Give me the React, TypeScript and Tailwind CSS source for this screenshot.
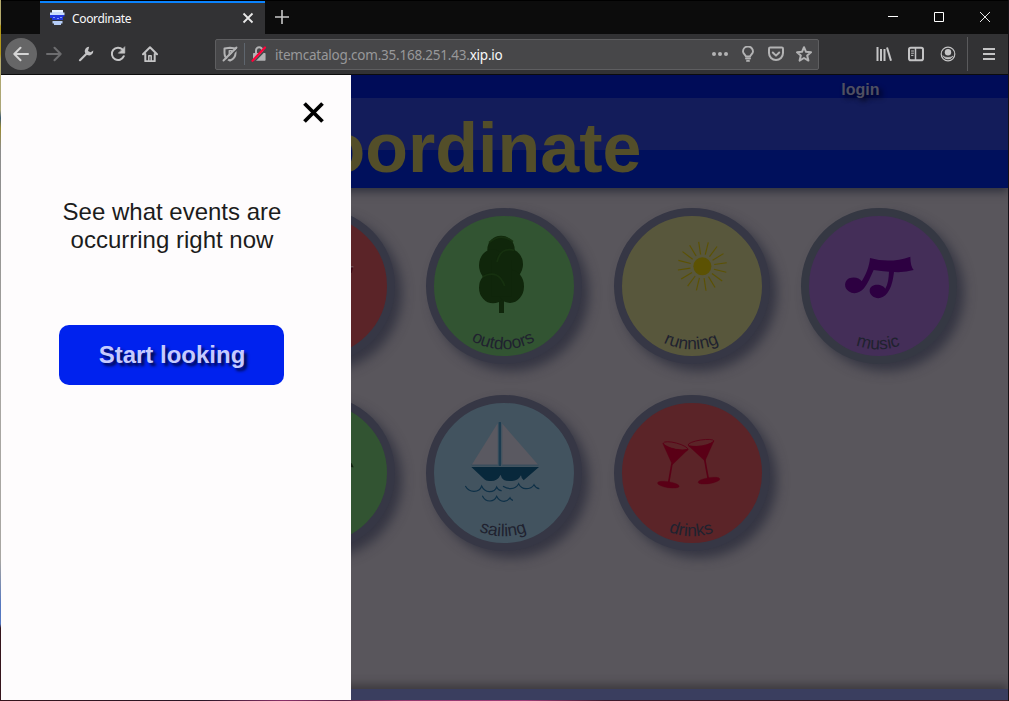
import React from "react";

type Category = {
  label: string;
  fill: string;
  ring: string;
  art: React.ReactNode;
};

const ringColor = "border-[#363745]";

const rays = Array.from({ length: 16 }, (_, i) => i * 22.5 + 10);

const rowOne: Category[] = [
  {
    label: "",
    fill: "bg-[#5b2428]",
    ring: ringColor,
    art: (
      <g transform="translate(304 -54)">
        <path d="M30 230h8v3l-4 16h-4z" fill="#3f0a16" />
        <path d="M30 229h9v3h-9z" fill="#7a6468" />
      </g>
    ),
  },
  {
    label: "outdoors",
    fill: "bg-[#325432]",
    ring: ringColor,
    art: (
      <g transform="translate(-258 -54)" fill="#10260b">
        <path d="M477 320h15v49h-15z" />
        <ellipse cx="483" cy="178" rx="41" ry="41" />
        <ellipse cx="458" cy="226" rx="41" ry="48" />
        <ellipse cx="508" cy="223" rx="41" ry="46" />
        <ellipse cx="459" cy="293" rx="42" ry="47" />
        <ellipse cx="510" cy="289" rx="42" ry="50" />
        <path d="M455 210h60v110h-60z" />
        <g fill="none" stroke="#16300f" strokeWidth="5">
          <path d="M447 158q36-32 72-3" />
          <path d="M471 216q10-46 52-35" />
          <path d="M428 260q48-24 66 28" />
        </g>
      </g>
    ),
  },
  {
    label: "running",
    fill: "bg-[#58573c]",
    ring: ringColor,
    art: (
      <g transform="translate(-42 -54)">
        <circle cx="307" cy="229" r="27" fill="#5c5203" />
        <g stroke="#5c5203" strokeWidth="3.4">
          {rays.map((a) => (
            <path key={a} d="M343 229H381" transform={`rotate(${a + 4} 307 229)`} />
          ))}
        </g>
      </g>
    ),
  },
  {
    label: "music",
    fill: "bg-[#442e58]",
    ring: "border-[#353843]",
    art: (
      <g transform="translate(-603 -54)" fill="#2d0041">
        <path d="M810 204Q870 221 931 200Q931 228 941 240Q915 248 882 246C879 270 875 292 862 309C850 326 830 329 817 318C804 307 807 289 824 285C839 282 852 289 856 296C864 282 866 264 867 245Q843 244 821 240C811 262 803 281 792 295C780 310 760 314 746 304C731 294 732 273 747 265C762 260 779 263 785 274C795 260 809 228 810 204Z" />
      </g>
    ),
  },
];

const rowTwo: Category[] = [
  {
    label: "",
    fill: "bg-[#325432]",
    ring: ringColor,
    art: (
      <g transform="translate(304 -45)">
        <path d="M30 252l4-3 4 9 2 4h-5l-5-2z" fill="#11210f" />
      </g>
    ),
  },
  {
    label: "sailing",
    fill: "bg-[#42535f]",
    ring: ringColor,
    art: (
      <g transform="translate(-258 -45)">
        <path d="M473 130V255H395Z" fill="#5a5961" />
        <path d="M487 131L595 255H487Z" fill="#5a5961" />
        <path d="M476 127q4-2 7 0V258h-7z" fill="#1d3c50" />
        <path d="M395 255H473M487 255H595" stroke="#2c4657" strokeWidth="2" />
        <path
          d="M394 261H597L551 301Q544 297 543 286Q534 303 516 303Q486 306 482 284Q472 304 451 303Q438 304 433 298Z"
          fill="#08283b"
        />
        <g fill="none" stroke="#0e3047" strokeWidth="3.4">
          <path d="M376 318Q385 334 402 334Q420 334 425 318Q432 334 448 335Q466 335 470 321Q476 333 485 332" />
          <path d="M489 319Q500 326 512 326Q529 325 536 311Q542 325 558 326Q575 326 582 314Q588 325 598 326" />
          <path d="M427 347Q434 363 450 363Q464 363 470 349Q477 364 492 364Q505 362 510 353Q513 360 519 361" />
        </g>
      </g>
    ),
  },
  {
    label: "drinks",
    fill: "bg-[#5b2428]",
    ring: ringColor,
    art: (
      <g transform="translate(-42 -45)" fill="#5a0016" stroke="#5a0016">
        <path d="M188 190L217 254L265 208Q226 214 192 194Z" strokeWidth="1" />
        <ellipse cx="227" cy="199" rx="38" ry="10" fill="none" strokeWidth="2.4" transform="rotate(15 227 199)" />
        <path d="M217 207q30 8 45 2l-12 3z" strokeWidth="3" />
        <path d="M216 250L206 308" strokeWidth="5" />
        <ellipse cx="205" cy="314" rx="33" ry="9" strokeWidth="1" transform="rotate(9 205 314)" />
        <path d="M265 197L315 243L342 182Q324 198 292 199Z" strokeWidth="1" />
        <ellipse cx="303" cy="189" rx="39" ry="9" fill="none" strokeWidth="2.4" transform="rotate(-9 303 189)" />
        <path d="M314 238L325 298" strokeWidth="5" />
        <ellipse cx="327" cy="302" rx="33" ry="9" strokeWidth="1" transform="rotate(-9 327 302)" />
      </g>
    ),
  },
];

function Badge({ item, id }: { item: Category; id: string }) {
  return (
    <div
      className={`h-[156px] w-[156px] shrink-0 rounded-full border-8 shadow-[7px_7px_12px_rgba(44,45,60,0.8)] ${item.ring} ${item.fill}`}
    >
      <svg viewBox="0 0 468 468" className="-m-2 h-[156px] w-[156px]">
        {item.art}
        {item.label && (
          <>
            <path id={id} d="M43 234A190 190 0 0 0 423 234" fill="none" />
            <text fontSize="52" fill="#20222f" textAnchor="middle" fontFamily="Liberation Sans, Arial, sans-serif">
              <textPath href={`#${id}`} startOffset="49.7%">
                {item.label}
              </textPath>
            </text>
          </>
        )}
      </svg>
    </div>
  );
}

function Icon({ children, className = "w-8" }: { children: React.ReactNode; className?: string }) {
  return (
    <span className={`flex h-8 shrink-0 items-center justify-center ${className}`}>
      <svg viewBox="0 0 16 16" className="h-4 w-4" fill="none" stroke="currentColor" strokeWidth="2" strokeLinecap="round" strokeLinejoin="round">
        {children}
      </svg>
    </span>
  );
}

function TabStrip() {
  return (
    <div className="flex h-[34px] border-t border-black bg-[#0c0c0c] text-[#f9f9fa]">
      <div className="ml-[39px] flex w-[225px] items-center border-t-2 border-[#0a84ff] bg-[#323234] pl-[9px]">
        <svg viewBox="0 0 16 16" className="-mt-px h-4 w-4">
          <path d="M3 0h11v2.500h1.500V5H1V2.500h2z" fill="#c9dcfb" />
          <path d="M3 0h11v2H3z" fill="#e9f2ff" />
          <path d="M1 5h14.500v1.500H14V10H3V8H1z" fill="#2036dc" />
          <path d="M4 7h2v1H4zM8 8h2v1H8zM11 7h2v1h-2z" fill="#7e95ff" />
          <path d="M3.500 11h10v2.500H12V15H5v-1.500H3.500z" fill="#b5cdf7" />
        </svg>
        <span className="ml-[7px] w-[166px] text-[12px] leading-4 tracking-[-0.33px]">Coordinate</span>
        <svg viewBox="0 0 20 20" className="-mt-px h-5 w-5" stroke="#e8e8e8" strokeWidth="1.8">
          <path d="M5.500 5.500l9 9M14.500 5.500l-9 9" />
        </svg>
      </div>
      <div className="flex w-[34px] items-center justify-center">
        <svg viewBox="0 0 14 14" className="-mt-[2px] h-[14px] w-[14px]" stroke="#c8c8c8" strokeWidth="1.6">
          <path d="M7 0v14M0 7h14" />
        </svg>
      </div>
      <div className="-mt-[2px] ml-auto flex">
        <span className="flex w-[46px] items-center justify-center">
          <svg viewBox="0 0 10 10" className="h-[10px] w-[10px]" fill="none" stroke="#fff">
            <path d="M0 4.500h10" />
          </svg>
        </span>
        <span className="flex w-[46px] items-center justify-center">
          <svg viewBox="0 0 10 10" className="h-[10px] w-[10px]" fill="none" stroke="#fff">
            <path d="M.5.5h9v9h-9z" />
          </svg>
        </span>
        <span className="flex w-[46px] items-center justify-center">
          <svg viewBox="0 0 10 10" className="h-[10px] w-[10px]" fill="none" stroke="#fff" strokeWidth="0.9">
            <path d="M0 0l10 10M10 0L0 10" />
          </svg>
        </span>
      </div>
    </div>
  );
}

function NavBar() {
  return (
    <div className="flex h-[41px] items-center border-b border-[#0c0c0d] bg-[#323234] pl-1 text-[#c4c4c5]">
      <div className="mr-px rounded-full bg-[#666667] text-[#d5d5d5]">
        <Icon>
          <path d="M15 8H1.500M7.500 1.800L1.300 8l6.200 6.200" />
        </Icon>
      </div>
      <Icon className="w-8 text-[#6d6d6f]">
        <path d="M1 8h13.500M8.500 1.800L14.700 8l-6.200 6.200" />
      </Icon>
      <Icon>
        <path d="M2 14.200l7-7" strokeWidth="2.200" />
        <path d="M11.200.8A4.300 4.300 0 0 0 7.200 7L9.200 9A4.300 4.300 0 0 0 15.300 4.600L12.600 6.200 10 5z" fill="currentColor" stroke="none" />
      </Icon>
      <Icon>
        <path d="M13.800 10.200A6.200 6.200 0 1 1 12.600 3.600" />
        <path d="M14.800 1v6.200H8.600z" fill="currentColor" strokeWidth="0.600" />
      </Icon>
      <Icon>
        <path d="M1 8.200L8 1.200l7 7M3.300 8v7.200h9.400V8" />
        <path d="M6.800 15v-5.200h2.400V15" strokeWidth="1.500" />
      </Icon>

      <div className="ml-[49px] flex h-[31px] w-[604px] items-center rounded-[2px] border border-[#5e5e60] bg-[#474749] text-[#b3b3b4]">
        <Icon className="w-[28px]">
          <path d="M8 1.800L2.500 2.500v4.700c0 3.400 2 5.800 5.500 7.300 3.500-1.500 5.500-3.900 5.500-7.300V2.500z" />
          <path d="M7.300 4.800v5l2.500-2.600V4.800z" strokeWidth="1.500" />
          <path d="M2.800 15.800L16 2.500" stroke="#474749" strokeWidth="1.600" />
          <path d="M1.500 14.500L14.500 1.500" strokeWidth="1.900" />
        </Icon>
        <span className="h-[22px] w-px bg-[#5f666e]" />
        <Icon className="w-[28px]">
          <path d="M2.800 7.800h11V14h-11z" fill="currentColor" strokeWidth="1.500" />
          <path d="M5 7V4.500a3.200 3.200 0 0 1 6.400 0V7" />
          <path d="M3 15.800L15.500 2.800" stroke="#474749" strokeWidth="1.600" />
          <path d="M1.500 14.800L14 1.500" stroke="#ff0039" strokeWidth="2.200" />
        </Icon>
        <span className="ml-[2px] mt-[2px] w-[431px] text-[13.500px] leading-5 tracking-[-0.22px] text-[#98989a]">
          itemcatalog.com.35.168.251.43.<span className="text-[#f9f9fa]">xip.io</span>
        </span>
        <Icon className="w-7">
          <g fill="currentColor" stroke="none">
            <circle cx="2" cy="8" r="2" />
            <circle cx="8" cy="8" r="2" />
            <circle cx="14" cy="8" r="2" />
          </g>
        </Icon>
        <Icon className="w-7">
          <path d="M5.800 10.500C5.800 8.800 3 8 3 5.500a5 5 0 0 1 10 0c0 2.500-2.800 3.300-2.800 5z" strokeWidth="1.900" />
          <path d="M6 12.500h4M7 14.900h2" strokeWidth="1.900" />
        </Icon>
        <Icon className="w-7">
          <path d="M2.200 1.500h11.600q1.200 0 1.200 1.200V7a7 7 0 0 1-14 0V2.700Q1 1.500 2.200 1.500z" />
          <path d="M4.800 6.500L8 9.600l3.200-3.100" />
        </Icon>
        <Icon className="w-7">
          <path d="M8 1.200l2 4.600 5 .5-3.800 3.300 1.200 5L8 12l-4.400 2.600 1.200-5L1 6.300l5-.5z" />
        </Icon>
      </div>

      <div className="ml-auto flex h-8">
        <Icon>
          <g strokeLinecap="butt">
            <path d="M1.500 1v14M5 3v12M8.500 3v12" strokeWidth="2" />
            <path d="M11 1.500l4 13.300" />
          </g>
        </Icon>
        <Icon>
          <rect x="1" y="1.800" width="14" height="12.400" rx="1.800" />
          <path d="M7.500 2v12" strokeWidth="1.500" />
          <path d="M3.500 5h2M3.500 7.200h2M3.500 9.400h1.500" strokeWidth="1" />
        </Icon>
        <Icon>
          <circle cx="8" cy="8" r="6.800" strokeWidth="1.200" />
          <circle cx="8" cy="6.300" r="3.200" fill="currentColor" stroke="none" />
          <path d="M3 10q1.500 1.500 5 1.500t5-1.500A5.600 5.600 0 0 1 3 10z" fill="currentColor" strokeWidth="0.600" />
        </Icon>
        <span className="ml-[3px] mr-[5px] h-[34px] w-px self-center bg-[#5a5a5c]" />
        <Icon className="mr-[3px] w-8">
          <path d="M2 3h12M2 8h12M2 13h12" strokeLinecap="butt" />
        </Icon>
      </div>
    </div>
  );
}

export default function App() {
  return (
    <div className="flex h-[701px] w-[1009px] overflow-hidden bg-[#1c1018] font-['Noto_Sans','Open_Sans',sans-serif]">
      <div className="w-px shrink-0 bg-[linear-gradient(to_bottom,#b4aa6c_0px,#b4aa6c_24px,#b59a18_26px,#b59a18_54px,#b4aa6c_60px,#aaa578_110px,#3c5a70_118px,#9a8a30_128px,#8c8c8c_150px,#a8a6a2_400px,#a8a6a2_560px,#5577c0_605px,#5577c0_624px,#35141c_628px,#35141c_701px)]" />
      <div className="flex w-[1007px] flex-col">
        <TabStrip />
        <NavBar />
        <div className="relative flex h-[625px] flex-col overflow-hidden bg-[#59565c] font-['Liberation_Sans',Arial,sans-serif]">
          <header className="flex h-[113px] shrink-0 flex-col bg-[linear-gradient(to_bottom,#000c58_0px,#000c58_23px,#131c5a_23px,#131c5a_75px,#00105c_75px)] shadow-[0_4px_8px_rgba(40,42,55,0.8)]">
            <div className="flex h-[23px] justify-end pr-[128.500px]">
              <a className="pt-[6px] text-[16px] font-bold leading-[18px] text-[#4f5062] [text-shadow:3px_3px_5px_rgba(0,0,10,0.8)]">login</a>
            </div>
            <h1 className="pl-[271px] pt-[10px] text-[70px] font-bold leading-[80px] text-[#534e29]">Coordinate</h1>
          </header>
          <main className="flex grow flex-col gap-[31px] pl-[237.800px] pt-5">
            <div className="flex gap-[31.500px]">
              {rowOne.map((item, i) => (
                <Badge key={i} item={item} id={`arc-one-${i}`} />
              ))}
            </div>
            <div className="flex gap-[31.500px]">
              {rowTwo.map((item, i) => (
                <Badge key={i} item={item} id={`arc-two-${i}`} />
              ))}
            </div>
          </main>
          <footer className="h-[11px] shrink-0 bg-[#3a3e5f] shadow-[0_-4px_10px_rgba(50,48,52,0.8)]" />

          <aside className="absolute inset-y-0 left-0 flex w-[350px] flex-col bg-[#fefcfd]">
            <button className="ml-[302px] mt-[27px] h-[21px] w-[21px]">
              <svg viewBox="0 0 21 21" className="h-[21px] w-[21px]" stroke="#000" strokeWidth="3.800">
                <path d="M1.500 1.500l18 18M19.500 1.500l-18 18" />
              </svg>
            </button>
            <div className="flex w-[342px] flex-col items-center pt-[75px]">
              <p className="w-[240px] text-center text-[24px] leading-[28px] text-[#1c1c1c]">See what events are occurring right now</p>
              <button className="mr-px mt-[71px] h-[60px] w-[225px] rounded-[10px] bg-[#0022ee] pl-px text-[24px] font-bold text-[#c5caff] [text-shadow:3px_3px_3px_rgba(0,0,20,0.75)]">
                Start looking
              </button>
            </div>
          </aside>
        </div>
        <div className="h-px bg-[linear-gradient(to_right,#35141c,#2a1626_20%,#8a3068_28%,#5c2348_34%,#95386e_40%,#a03c78_52%,#3c1a2c_60%,#32161f_80%,#42202c)]" />
      </div>
      <div className="w-px bg-[#151014]" />
    </div>
  );
}
